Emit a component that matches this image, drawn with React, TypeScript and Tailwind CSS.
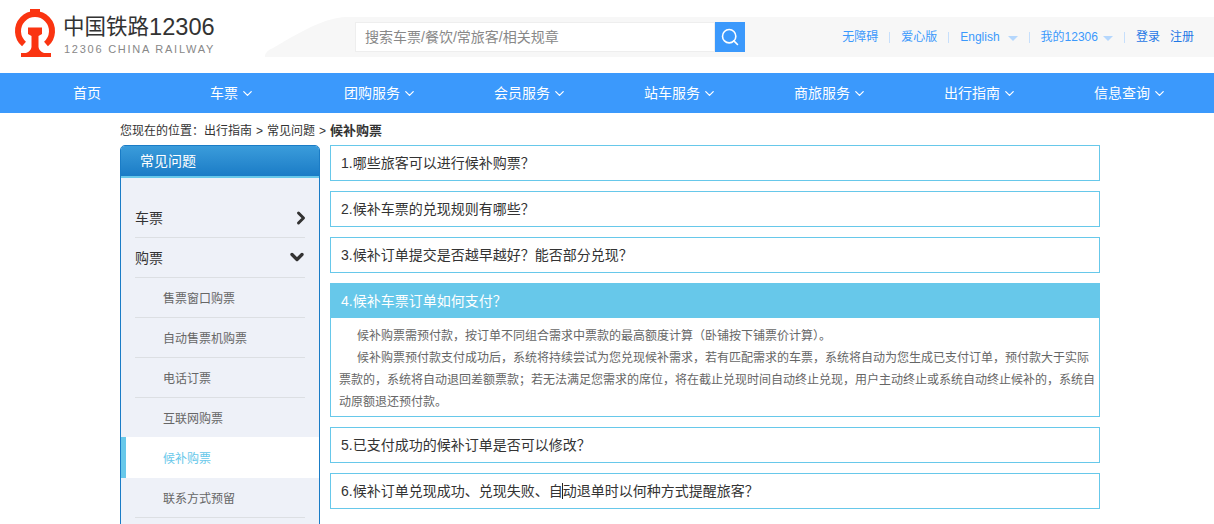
import { ChevronDown, ChevronRight, Search } from 'lucide-react';

const font = { fontFamily: '"Liberation Sans", "Noto Sans CJK SC", sans-serif' };

const navItems = [
  { label: '首页', width: 'w-[137px]' },
  { label: '车票', width: 'w-[134px]', menu: true },
  { label: '团购服务', width: 'w-[150px]', menu: true },
  { label: '会员服务', width: 'w-[150px]', menu: true },
  { label: '站车服务', width: 'w-[150px]', menu: true },
  { label: '商旅服务', width: 'w-[150px]', menu: true },
  { label: '出行指南', width: 'w-[150px]', menu: true },
  { label: '信息查询', width: 'w-[120px]', menu: true },
];

const subItems = ['售票窗口购票', '自动售票机购票', '电话订票', '互联网购票', '候补购票', '联系方式预留'];

const questions = [
  '1.哪些旅客可以进行候补购票？',
  '2.候补车票的兑现规则有哪些？',
  '3.候补订单提交是否越早越好？能否部分兑现？',
  '4.候补车票订单如何支付？',
  '5.已支付成功的候补订单是否可以修改？',
  '6.候补订单兑现成功、兑现失败、自动退单时以何种方式提醒旅客？',
];

function Logo() {
  return (
    <svg width="64" height="60" viewBox="0 0 64 60" className="shrink-0">
      <path d="M24 44 A17 17 0 1 1 46 44" fill="none" stroke="#fa3411" strokeWidth="6" />
      <rect x="30" y="9" width="10" height="5" fill="#fa3411" />
      <path d="M28 27.5 H42 V34 L38.5 36 V47 Q39 51 44 53 H51 V57 H21 V53 H26 Q31 51 31.5 47 V36 L28 34 Z" fill="#fa3411" />
    </svg>
  );
}

function Caret() {
  return <span className="ml-[5px] mt-[3px] h-0 w-0 border-x-[5px] border-t-[5px] border-x-transparent border-t-[#b5d7fd]" />;
}

function Sep() {
  return <span className="mx-[11px] h-[11px] w-px bg-[#c6dffc]" />;
}

function Header() {
  return (
    <header className="flex h-[73px] bg-white">
      <div className="flex w-[265px] shrink-0 items-start">
        <Logo />
        <div className="-ml-px mt-[13px] text-[#333]">
          <div className="flex h-[30px] items-center whitespace-nowrap">
            <span className="text-[21.5px] leading-none">中国铁路</span>
            <span className="text-[23.6px] leading-none">12306</span>
          </div>
          <div className="mt-[-1px] ml-px whitespace-nowrap text-[11px] leading-[14px] tracking-[1.75px] text-[#888]">12306 CHINA RAILWAY</div>
        </div>
      </div>
      <div className="mt-[17px] flex h-10 flex-1">
        <svg width="80" height="40" viewBox="0 0 80 40" className="shrink-0">
          <path d="M0 40 C0 36 2 34 8 31 C30 18 50 6 68 2 C72 1 76 0 80 0 V40 Z" fill="#f7f7f7" />
        </svg>
        <div className="flex flex-1 items-center bg-[#f7f7f7] pl-[10px] pr-[20px]">
          <div className="flex h-[30px] w-[390px] shrink-0">
            <div className="flex h-full w-[360px] items-center border border-[#eeeeee] bg-white pl-[9px] text-sm text-[#888]">
              搜索车票/餐饮/常旅客/相关规章
            </div>
            <div className="flex h-full w-[30px] items-center justify-center bg-[#3b99fc]">
              <Search size={20} strokeWidth={1.9} className="text-white" />
            </div>
          </div>
          <div className="ml-auto flex items-center whitespace-nowrap text-xs text-[#3b99fc]">
            <span>无障碍</span>
            <Sep />
            <span>爱心版</span>
            <Sep />
            <span>English</span>
            <span className="ml-[3px]" />
            <Caret />
            <Sep />
            <span>我的12306</span>
            <Caret />
            <Sep />
            <span className="text-[#1f78e6]">登录</span>
            <span className="ml-[10px] text-[#1f78e6]">注册</span>
          </div>
        </div>
      </div>
    </header>
  );
}

function Nav() {
  return (
    <nav className="flex h-10 items-center bg-[#3b99fc] pl-[73px] text-sm text-white">
      {navItems.map((item) => (
        <div key={item.label} className={`flex shrink-0 items-center whitespace-nowrap ${item.width}`}>
          {item.label}
          {item.menu && <ChevronDown size={15} strokeWidth={2} className="ml-[2px]" />}
        </div>
      ))}
    </nav>
  );
}

function Sidebar() {
  return (
    <aside className="h-[400px] w-[200px] shrink-0 overflow-hidden rounded-t-[5px] border border-[#1a7cc6] bg-[#eef1f8]">
      <div className="h-[32px] border-b-2 border-[#67c8ea] bg-gradient-to-b from-[#3a9cdb] to-[#1a7cc6] pl-[19px] text-sm leading-[30px] text-white">
        常见问题
      </div>
      <div className="pt-[20px] text-sm text-[#333]">
        <div className="mx-[14px] flex h-10 items-center justify-between border-b border-[#dcdfe3]">
          车票
          <ChevronRight size={20} strokeWidth={3.6} className="-mr-[6px] text-[#333]" />
        </div>
        <div className="mx-[14px] flex h-10 items-center justify-between border-b border-[#dcdfe3]">
          购票
          <ChevronDown size={20} strokeWidth={4} className="-mr-[2px] mb-[2px] text-[#333]" />
        </div>
        {subItems.map((item) =>
          item === '候补购票' ? (
            <div key={item} className="h-[41px] border-l-[5px] border-[#67c8ea] bg-white pl-[37px] text-xs leading-[44px] text-[#67c8ea]">
              {item}
            </div>
          ) : (
            <div
              key={item}
              className={`mx-[14px] pl-[28px] text-xs leading-[42px] text-[#666] ${item === '互联网购票' ? 'h-[39px]' : 'h-10 border-b border-[#dcdfe3]'}`}
            >
              {item}
            </div>
          ),
        )}
      </div>
    </aside>
  );
}

function Questions() {
  return (
    <div className="flex w-[770px] shrink-0 flex-col gap-[10px]">
      {questions.map((q, i) =>
        i === 3 ? (
          <div key={q} className="border border-[#67c8ea]">
            <div className="h-[34px] bg-[#67c8ea] pl-[10px] text-sm leading-[34px] text-white">{q}</div>
            <div className="pb-[3px] pl-[8px] pr-[3px] pt-[7px] text-xs leading-[22px] text-[#666]">
              <p className="indent-[18px]">候补购票需预付款，按订单不同组合需求中票款的最高额度计算（卧铺按下铺票价计算）。</p>
              <p className="indent-[18px]">
                候补购票预付款支付成功后，系统将持续尝试为您兑现候补需求，若有匹配需求的车票，系统将自动为您生成已支付订单，预付款大于实际票款的，系统将自动退回差额票款；若无法满足您需求的席位，将在截止兑现时间自动终止兑现，用户主动终止或系统自动终止候补的，系统自动原额退还预付款。
              </p>
            </div>
          </div>
        ) : (
          <div key={q} className="relative h-9 border border-[#67c8ea] pl-[10px] text-sm leading-[34px] text-[#333]">
            {q}
            {/* mouse cursor caught in the screenshot */}
            {i === 5 && <span className="absolute left-[231px] top-[9px] h-4 w-px bg-[#222]" />}
          </div>
        ),
      )}
    </div>
  );
}

export default function App() {
  return (
    <div className="h-[524px] overflow-hidden bg-white" style={font}>
      <Header />
      <Nav />
      <div className="pl-[120px]">
        <div className="flex h-[32px] items-center pt-[4px] text-xs text-[#333]">
          您现在的位置：出行指南
          <span className="mx-[4px]">&gt;</span>
          常见问题
          <span className="mx-[4px]">&gt;</span>
          <b className="text-[13px]">候补购票</b>
        </div>
        <div className="flex items-start gap-[10px]">
          <Sidebar />
          <Questions />
        </div>
      </div>
    </div>
  );
}
